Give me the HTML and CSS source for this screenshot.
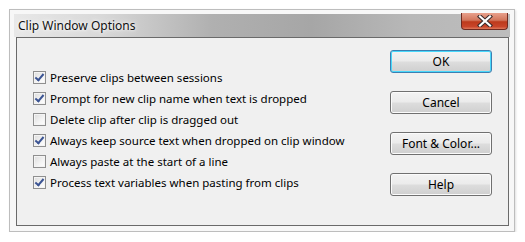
FILE: index.html
```html
<!DOCTYPE html>
<html>
<head>
<meta charset="utf-8">
<link rel="stylesheet" href="styles.css">
</head>
<body>
<div class="frame">
  <div class="titlebar"><span class="title">Clip Window Options</span></div>
  <div class="close"><svg width="16" height="12" viewBox="0 0 16 12"><path d="M3 1.5 L13 10.5 M13 1.5 L3 10.5" stroke="#3a2a2a" stroke-width="4.2" stroke-linecap="square"/><path d="M3 1.5 L13 10.5 M13 1.5 L3 10.5" stroke="#ffffff" stroke-width="2.2" stroke-linecap="square"/></svg></div>
  <div class="client">
    <div class="options">
      <label class="opt"><span class="cb on"></span>Preserve clips between sessions</label>
      <label class="opt"><span class="cb on"></span>Prompt for new clip name when text is dropped</label>
      <label class="opt"><span class="cb"></span>Delete clip after clip is dragged out</label>
      <label class="opt"><span class="cb on"></span>Always keep source text when dropped on clip window</label>
      <label class="opt"><span class="cb"></span>Always paste at the start of a line</label>
      <label class="opt"><span class="cb on"></span>Process text variables when pasting from clips</label>
    </div>
    <div class="buttons">
      <div class="btn default">OK</div>
      <div class="btn">Cancel</div>
      <div class="btn">Font &amp; Color...</div>
      <div class="btn">Help</div>
    </div>
  </div>
</div>
</body>
</html>
```
FILE: styles.css
```css
body {
  margin: 0;
  background: #ffffff;
  font-family: "Noto Sans", "Open Sans", sans-serif;
  font-size: 12px;
  color: #000;
}
.frame {
  position: relative;
  margin: 9px 0 0 9px;
  width: 496px;
  height: 213px;
  padding: 4px 4px 4px 4px;
  border: 1px solid #bdbdbd;
  background: #f7f7f7;
  box-shadow: 1px 1px 2px rgba(0,0,0,0.12);
}
.titlebar {
  height: 23px;
  background: linear-gradient(90deg, #e8e8e8 0%, #d8d8d8 18%, #b0b0b0 40%, #a6a6a6 60%, #b8b8b8 80%, #bdbdbd 100%);
  display: flex;
  align-items: center;
}
.title {
  margin-left: 4px;
  font-size: 12px;
  color: #111;
  text-shadow: 0 0 6px #ffffff, 0 0 3px #ffffff;
  position: relative;
  top: 0px;
}
.close {
  position: absolute;
  top: 3px;
  right: 6px;
  width: 45px;
  height: 16px;
  border: 1px solid #6e2a20;
  border-top: none;
  border-radius: 0 0 4px 4px;
  background: linear-gradient(180deg, #e8a08c 0%, #d2765c 45%, #bd3a1c 55%, #c9452a 85%, #de7a5c 100%);
  display: flex;
  align-items: center;
  justify-content: center;
}
.client {
  margin: 0 1px 0 2px;
  height: 187px;
  border: 1px solid #6a6a6a;
  background: #f0f0f0;
  display: flex;
  justify-content: space-between;
}
.options {
  padding: 29px 0 0 16px;
  display: flex;
  flex-direction: column;
}
.opt {
  height: 21px;
  display: flex;
  align-items: center;
  white-space: nowrap;
  font-size: 11.5px;
}
.cb {
  width: 11px;
  height: 11px;
  border: 1px solid #8f8f8f;
  background: linear-gradient(135deg, #dcdcdc 0%, #f4f4f4 60%, #ffffff 100%);
  box-shadow: inset 0 0 0 1px #f4f4f4;
  margin-right: 4px;
  flex: none;
  position: relative;
}
.cb.on::after {
  content: "";
  position: absolute;
  left: 3px;
  top: 0px;
  width: 3px;
  height: 7px;
  border-right: 2px solid #3b5493;
  border-bottom: 2px solid #3b5493;
  transform: rotate(40deg);
}
.buttons {
  padding: 12px 16px 0 0;
  display: flex;
  flex-direction: column;
  gap: 18px;
}
.btn {
  width: 100px;
  height: 21px;
  border: 1px solid #707070;
  border-radius: 3px;
  background: linear-gradient(180deg, #f3f3f3 0%, #ebebeb 48%, #dddddd 52%, #cfcfcf 100%);
  box-shadow: inset 0 0 0 1px #fbfbfb;
  display: flex;
  align-items: center;
  justify-content: center;
  font-size: 12px;
}
.btn.default {
  border-color: #3c7fb1;
  box-shadow: inset 0 0 0 1px #48d8fb;
}
```
